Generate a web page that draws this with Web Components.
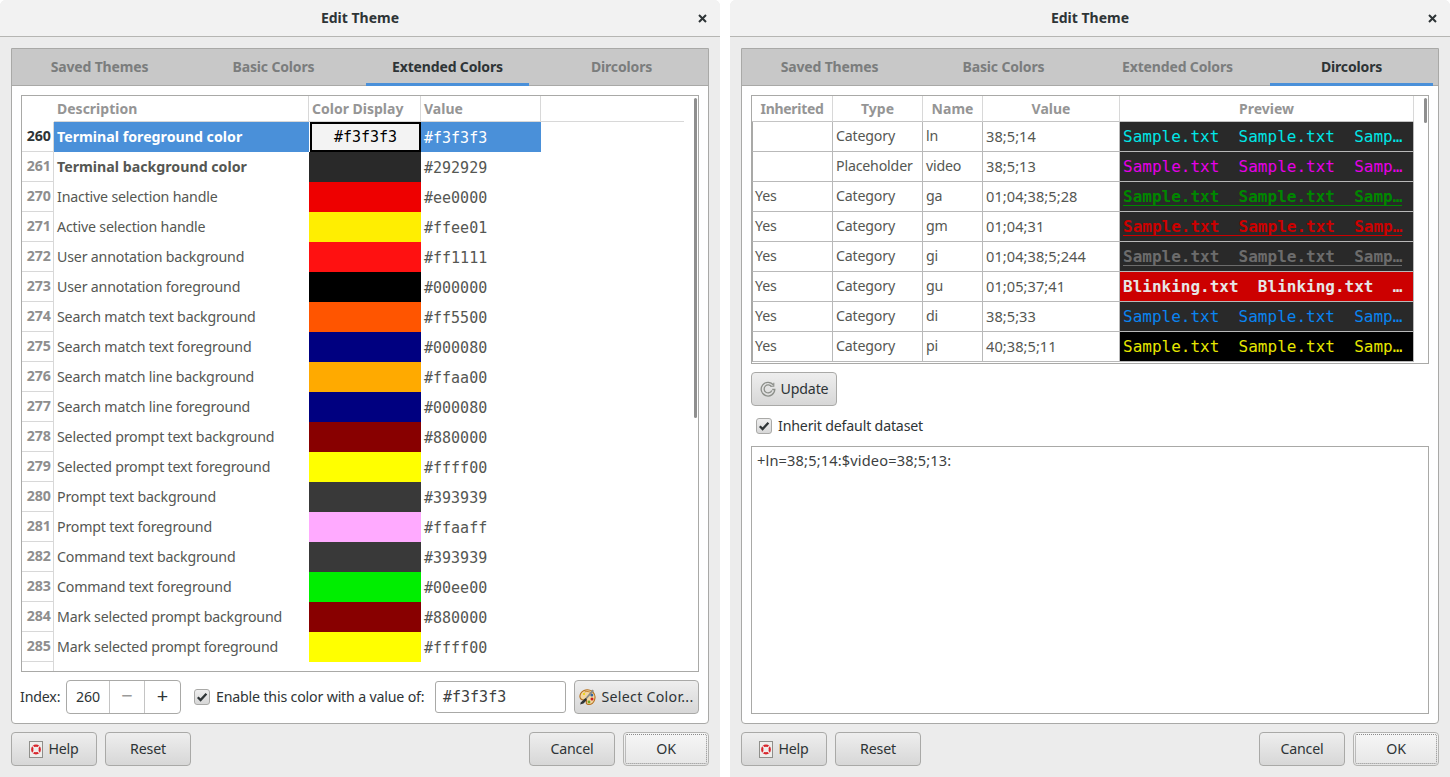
<!DOCTYPE html>
<html>
<head>
<meta charset="utf-8">
<title>Edit Theme</title>
<style>
  html, body { margin: 0; height: 100%; background: #fff; }
  body {
    display: flex;
    justify-content: space-between;
    font: 14.2px "Noto Sans", sans-serif;
    letter-spacing: -0.18px;
    color: #2e3436;
  }
</style>
</head>
<body>
<edit-theme active="2">
  <extended-colors></extended-colors>
</edit-theme>
<edit-theme active="3">
  <dircolors-panel></dircolors-panel>
</edit-theme>

<script>
const MONO = '"DejaVu Sans Mono", monospace';

const HELP_ICON = `<svg width="14" height="17" viewBox="0 0 14 17">
  <rect x=".5" y=".5" width="13" height="16" fill="#eeeeec" stroke="#8f8f8b"/>
  <circle cx="7" cy="8.500" r="3.800" fill="none" stroke="#d8262c" stroke-width="2.200"/>
  <path d="M3.600 5.100 5.800 7.300M10.400 5.100 8.200 7.300M3.600 11.900 5.800 9.700M10.400 11.900 8.200 9.700" stroke="#f4f4f2" stroke-width="1.300"/>
</svg>`;

const PALETTE_ICON = `<svg width="17" height="17" viewBox="0 0 17 17">
  <path d="M5 1.500c3-1.200 7-.6 9 1.600 2 2.200 2.400 5.500 1.500 8-1 2.800-3.500 4.600-6 4.400-2-.2-2.600-1.600-2-3 .5-1.200-.4-2-1.800-1.700-2 .4-4.200-.4-4.700-2.600C.5 5.500 2.400 2.500 5 1.500z" fill="#f3d6a0" stroke="#b5701c" stroke-width="1.100"/>
  <path d="M5.500 3c2-1 5-.6 7 1" fill="none" stroke="#c98a34"/>
  <circle cx="12.800" cy="6" r="1.500" fill="#3465a4"/>
  <circle cx="13" cy="10" r="1.500" fill="#cc2020"/>
  <circle cx="10" cy="13" r="1.400" fill="#73a020"/>
  <circle cx="5" cy="5" r="1.100" fill="#edd400"/>
  <path d="M13.500.5 6.500 9l1.200 1L15 2z" fill="#8a8a86"/>
  <path d="M6.500 9 4.800 10.400 2 13.200 1 15.500l3.500-1 2.500-2.600 1-1.800z" fill="#2e3436"/>
</svg>`;

const UPDATE_ICON = `<svg width="16" height="16" viewBox="0 0 16 16" fill="none" stroke="#8c8f8a">
  <path d="M13.500 4.200A6.800 6.800 0 1 0 14.800 8.500H12.200" stroke-width="1.300"/>
  <path d="M11.400 5.600A4 4 0 1 0 11.800 9.500" stroke-width="1.300"/>
  <path d="M13.800 1.800v3.400h-3.200" stroke-width="1.100"/>
</svg>`;

class ThemeButton extends HTMLElement {
  constructor() {
    super();
    this.attachShadow({ mode: 'open' });
    this.shadowRoot.innerHTML = `
      <style>
        :host {
          display: inline-flex;
          box-sizing: border-box;
          align-items: center;
          justify-content: center;
          gap: 5px;
          height: 34px;
          width: 86px;
          border: 1px solid #a9a9a7;
          border-radius: 4px;
          background: linear-gradient(#eeeeee, #d7d7d7);
          color: #2e3436;
          white-space: nowrap;
          position: relative;
        }
        :host([default]) {
          background: linear-gradient(#f6f6f6, #e6e6e6);
          border-color: #b4b4b2;
        }
        :host([default])::after {
          content: '';
          position: absolute;
          inset: 1px;
          border: 1px dotted #8a8a8a;
          border-radius: 2px;
        }
        svg { display: block; }
        .lab { padding-bottom: 2px; }
      </style>
      ${this.getIcon()}<span class="lab"><slot></slot></span>`;
  }

  getIcon() {
    return { help: HELP_ICON, palette: PALETTE_ICON, update: UPDATE_ICON }[this.getAttribute('icon')] ?? '';
  }
}

class ThemeCheck extends HTMLElement {
  constructor() {
    super();
    this.attachShadow({ mode: 'open' });
    this.shadowRoot.innerHTML = `
      <style>
        :host {
          display: inline-flex;
          align-items: center;
          gap: 6px;
          white-space: nowrap;
        }
        .box {
          box-sizing: border-box;
          width: 16px;
          height: 16px;
          border: 1px solid #a9a9a7;
          border-radius: 3px;
          background: linear-gradient(#eeeeee, #d7d7d7);
        }
        svg { display: block; }
        .lab { padding-bottom: 2px; }
      </style>
      <div class="box">
        <svg width="14" height="14" viewBox="0 0 14 14"><path d="M2.800 7.200 5.600 10l5.800-6.200" fill="none" stroke="#2e3436" stroke-width="2.300"/></svg>
      </div>
      <span class="lab"><slot></slot></span>`;
  }
}

class EditTheme extends HTMLElement {
  constructor() {
    super();
    this.attachShadow({ mode: 'open' });
    const tabs = ['Saved Themes', 'Basic Colors', 'Extended Colors', 'Dircolors'];
    const active = Number(this.getAttribute('active'));
    this.shadowRoot.innerHTML = `
      <style>
        :host {
          display: flex;
          flex-direction: column;
          width: 720px;
          height: 777px;
          box-sizing: border-box;
          background: #ececec;
          border-radius: 6px 6px 0 0;
          overflow: hidden;
        }
        .header {
          flex: none;
          height: 36px;
          display: grid;
          grid-template-columns: 40px 1fr 40px;
          align-items: center;
          background: #f2f2f2;
          border-bottom: 1px solid #b6b6b3;
        }
        .title { text-align: center; font-weight: 700; font-size: 14px; letter-spacing: 0; grid-column: 2; padding-bottom: 2px; }
        .close { justify-self: end; margin-right: 13px; display: block; }
        .body {
          flex: 1;
          display: flex;
          flex-direction: column;
          padding: 11px;
          gap: 8px;
          min-height: 0;
        }
        .notebook {
          flex: 1;
          min-height: 0;
          display: flex;
          flex-direction: column;
          border: 1px solid #a9a9a7;
          border-radius: 0 0 4px 4px;
          background: #fff;
        }
        .tabs {
          flex: none;
          height: 36px;
          display: grid;
          grid-template-columns: repeat(4, 1fr);
          background: #c8c8c8;
          border-bottom: 1px solid #a9a9a7;
        }
        .tab {
          display: flex;
          align-items: center;
          justify-content: center;
          margin: 0 5px -1px 6px;
          font-weight: 700;
          color: #7b7d7d;
          font-size: 14px;
          letter-spacing: -0.15px;
          box-sizing: border-box;
          border-bottom: 3px solid transparent;
        }
        .tab.active { color: #2e3436; border-bottom-color: #4a90d9; }
        .panel { flex: 1; min-height: 0; display: flex; padding: 9px; }
        ::slotted(*) { flex: 1; min-width: 0; }
        .footer { flex: none; display: flex; gap: 8px; }
        .spacer { flex: 1; }
      </style>
      <div class="header">
        <div class="title">Edit Theme</div>
        <svg class="close" width="9" height="9" viewBox="0 0 9 9"><path d="M1 1l7 7M8 1 1 8" stroke="#2e3436" stroke-width="2"/></svg>
      </div>
      <div class="body">
        <div class="notebook">
          <div class="tabs">
            ${tabs.map((tab, i) => `<div class="tab${i === active ? ' active' : ''}">${tab}</div>`).join('')}
          </div>
          <div class="panel"><slot></slot></div>
        </div>
        <div class="footer">
          <theme-button icon="help">Help</theme-button>
          <theme-button>Reset</theme-button>
          <div class="spacer"></div>
          <theme-button>Cancel</theme-button>
          <theme-button default>OK</theme-button>
        </div>
      </div>`;
  }
}

const COLOR_ROWS = [
  [260, 'Terminal foreground color', '#f3f3f3'],
  [261, 'Terminal background color', '#292929'],
  [270, 'Inactive selection handle', '#ee0000'],
  [271, 'Active selection handle', '#ffee01'],
  [272, 'User annotation background', '#ff1111'],
  [273, 'User annotation foreground', '#000000'],
  [274, 'Search match text background', '#ff5500'],
  [275, 'Search match text foreground', '#000080'],
  [276, 'Search match line background', '#ffaa00'],
  [277, 'Search match line foreground', '#000080'],
  [278, 'Selected prompt text background', '#880000'],
  [279, 'Selected prompt text foreground', '#ffff00'],
  [280, 'Prompt text background', '#393939'],
  [281, 'Prompt text foreground', '#ffaaff'],
  [282, 'Command text background', '#393939'],
  [283, 'Command text foreground', '#00ee00'],
  [284, 'Mark selected prompt background', '#880000'],
  [285, 'Mark selected prompt foreground', '#ffff00'],
];

class ExtendedColors extends HTMLElement {
  constructor() {
    super();
    this.attachShadow({ mode: 'open' });
    const rows = COLOR_ROWS.map(([index, text, value], i) => {
      const sel = i === 0 ? ' sel' : '';
      const bold = i < 2 ? ' strong' : '';
      const swatch = i === 0
        ? `<div class="swatch current">${value}</div>`
        : `<div class="swatch" style="background:${value}"></div>`;
      return `<div class="num${i === 0 ? ' on' : ''}">${index}</div>
        <div class="desc${sel}${bold}">${text}</div>
        ${swatch}
        <div class="value${sel}">${value}</div>
        <div></div>`;
    }).join('');
    this.shadowRoot.innerHTML = `
      <style>
        :host { display: flex; flex-direction: column; gap: 8px; }
        .table {
          flex: none;
          height: 577px;
          box-sizing: border-box;
          border: 1px solid #a9a9a7;
          overflow: hidden;
          position: relative;
        }
        .grid {
          display: grid;
          grid-template-columns: 32px 255px 112px 120px 143px;
          grid-template-rows: 26px;
          grid-auto-rows: 30px;
          width: 662px;
          color: #555753;
        }
        .head {
          box-sizing: border-box;
          border-right: 1px solid #d8d8d8;
          border-bottom: 1px solid #d8d8d8;
          padding: 0 0 1px 3px;
          font-weight: 700;
          color: #959595;
          display: flex;
          align-items: center;
          font-size: 14px;
          letter-spacing: 0;
        }
        .head.first { border: 0; }
        .head.last { border-right: 0; }
        .num {
          box-sizing: border-box;
          border-right: 1px solid #d8d8d8;
          border-bottom: 1px solid #d8d8d8;
          font-weight: 700;
          letter-spacing: 0;
          color: #8e8e8e;
          display: flex;
          align-items: center;
          justify-content: flex-end;
          padding: 0 2px 2px 0;
        }
        .num.on { color: #2e3436; }
        .desc, .value { display: flex; align-items: center; padding-left: 3px; white-space: nowrap; }
        .desc { padding-bottom: 2px; }
        .value { font: 15px ${MONO}; letter-spacing: 0; padding-top: 1px; }
        .strong { font-weight: 700; letter-spacing: 0; }
        .sel { background: #4a90d9; color: #fff; }
        .swatch {
          display: flex;
          align-items: center;
          justify-content: center;
          font: 15px ${MONO};
          letter-spacing: 0;
          color: #000;
        }
        .current { background: #f3f3f3; box-sizing: border-box; border: 2px solid #000; margin-left: 1px; }
        .scroll {
          position: absolute;
          right: 1px;
          top: 2px;
          width: 3px;
          height: 320px;
          border-radius: 2px;
          background: #8f8f8f;
        }
        .bar { flex: none; height: 34px; display: flex; align-items: center; }
        .label { width: 46px; margin-left: -1px; padding-bottom: 2px; flex: none; }
        .spin {
          flex: none;
          box-sizing: border-box;
          width: 115px;
          height: 34px;
          display: grid;
          grid-template-columns: 42px 35px 1fr;
          border: 1px solid #a9a9a7;
          border-radius: 4px;
          background: #fff;
        }
        .spin div { display: flex; align-items: center; justify-content: center; padding-bottom: 2px; }
        .spin .btn { border-left: 1px solid #c4c4c4; font-size: 20px; padding: 0 0 3px; }
        .minus { color: #9a9a9a; }
        theme-check { margin-left: 13px; flex: 1; min-width: 0; }
        .entry {
          flex: none;
          box-sizing: border-box;
          width: 131px;
          height: 32px;
          border: 1px solid #a9a9a7;
          border-radius: 3px;
          padding-left: 7px;
          display: flex;
          align-items: center;
          font: 15px ${MONO};
          letter-spacing: 0;
          background: #fff;
          color: #3d3f3f;
        }
        theme-button { width: 125px; margin-left: 8px; flex: none; letter-spacing: 0.28px; }
      </style>
      <div class="table">
        <div class="grid">
          <div class="head first"></div>
          <div class="head">Description</div>
          <div class="head">Color Display</div>
          <div class="head">Value</div>
          <div class="head last"></div>
          ${rows}
          <div class="num"></div>
        </div>
        <div class="scroll"></div>
      </div>
      <div class="bar">
        <div class="label">Index:</div>
        <div class="spin">
          <div>260</div>
          <div class="btn minus">&#8722;</div>
          <div class="btn">+</div>
        </div>
        <theme-check>Enable this color with a value of:</theme-check>
        <div class="entry">#f3f3f3</div>
        <theme-button icon="palette">Select Color...</theme-button>
      </div>`;
  }
}

const SAMPLE = 'Sample.txt  Sample.txt  Samp\u2026';
const DIR_ROWS = [
  ['', 'Category', 'ln', '38;5;14', SAMPLE, 'color:#00e6e6'],
  ['', 'Placeholder', 'video', '38;5;13', SAMPLE, 'color:#e600e6'],
  ['Yes', 'Category', 'ga', '01;04;38;5;28', SAMPLE, 'color:#008700;font-weight:700', 'u'],
  ['Yes', 'Category', 'gm', '01;04;31', SAMPLE, 'color:#cc0000;font-weight:700', 'u'],
  ['Yes', 'Category', 'gi', '01;04;38;5;244', SAMPLE, 'color:#6c6c6c;font-weight:700', 'u'],
  ['Yes', 'Category', 'gu', '01;05;37;41', 'Blinking.txt  Blinking.txt  \u2026', 'color:#e6e6e6;background:#cc0000;font-weight:700'],
  ['Yes', 'Category', 'di', '38;5;33', SAMPLE, 'color:#0a84f0'],
  ['Yes', 'Category', 'pi', '40;38;5;11', SAMPLE, 'color:#e6e600;background:#000'],
];

class DircolorsPanel extends HTMLElement {
  constructor() {
    super();
    this.attachShadow({ mode: 'open' });
    const rows = DIR_ROWS.map(([inherited, type, name, value, sample, style, mark]) => `
      <div class="cell">${inherited}</div>
      <div class="cell">${type}</div>
      <div class="cell">${name}</div>
      <div class="cell val">${value}</div>
      <div class="preview" style="${style}"><span class="${mark ?? ''}">${sample}</span></div>`).join('');
    this.shadowRoot.innerHTML = `
      <style>
        :host { display: flex; flex-direction: column; }
        .table {
          flex: none;
          height: 269px;
          box-sizing: border-box;
          border: 1px solid #a9a9a7;
          overflow: hidden;
          position: relative;
        }
        .grid {
          display: grid;
          grid-template-columns: 81px 90px 60px 137px 294px;
          grid-template-rows: 26px;
          grid-auto-rows: 30px;
          width: 662px;
          color: #555753;
        }
        .head {
          box-sizing: border-box;
          border-right: 1px solid #d8d8d8;
          border-bottom: 1px solid #c4c4c4;
          font-weight: 700;
          color: #959595;
          display: flex;
          align-items: center;
          justify-content: center;
          font-size: 14px;
          letter-spacing: 0;
          padding-bottom: 1px;
        }
        .cell {
          box-sizing: border-box;
          border-right: 1px solid #b9b9b9;
          border-bottom: 1px solid #b9b9b9;
          display: flex;
          align-items: center;
          padding: 0 0 2px 3px;
          white-space: nowrap;
        }
        .cell:nth-child(5n+1) { border-left: 1px solid #a9a9a7; padding-left: 2px; }
        .val { font-size: 14.6px; letter-spacing: 0.05px; }
        .preview {
          box-sizing: border-box;
          background: #292929;
          border-bottom: 1px solid #b9b9b9;
          border-right: 1px solid #b9b9b9;
          padding-left: 3px;
          display: flex;
          align-items: center;
          white-space: pre;
          font: 16px ${MONO};
          letter-spacing: 0;
        }
        .u {
          display: block;
          line-height: 16px;
          margin-top: 1px;
          border-bottom: 1px solid currentColor;
        }
        .scroll {
          position: absolute;
          right: 1px;
          top: 2px;
          width: 3px;
          height: 25px;
          border-radius: 2px;
          background: #8f8f8f;
        }
        theme-button { margin-top: 8px; flex: none; }
        .check { flex: none; height: 24px; margin: 8px 0 8px 5px; display: flex; align-items: center; }
        .text {
          flex: 1;
          min-height: 0;
          box-sizing: border-box;
          border: 1px solid #a9a9a7;
          padding: 3px 5px;
          color: #3d3f3f;
          font-size: 14.6px;
          letter-spacing: 0.15px;
        }
      </style>
      <div class="table">
        <div class="grid">
          <div class="head" style="letter-spacing:-0.3px">Inherited</div>
          <div class="head">Type</div>
          <div class="head">Name</div>
          <div class="head">Value</div>
          <div class="head">Preview</div>
          ${rows}
        </div>
        <div class="scroll"></div>
      </div>
      <theme-button icon="update">Update</theme-button>
      <div class="check"><theme-check>Inherit default dataset</theme-check></div>
      <div class="text">+ln=38;5;14:$video=38;5;13:</div>`;
  }
}

customElements.define('theme-button', ThemeButton);
customElements.define('theme-check', ThemeCheck);
customElements.define('edit-theme', EditTheme);
customElements.define('extended-colors', ExtendedColors);
customElements.define('dircolors-panel', DircolorsPanel);
</script>
</body>
</html>
